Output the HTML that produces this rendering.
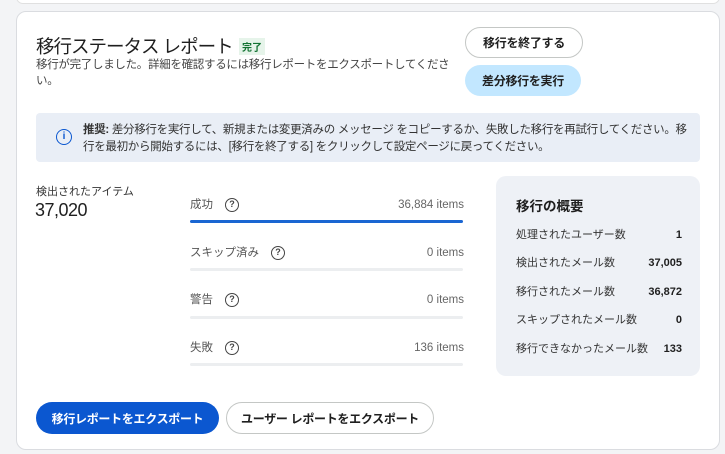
<!DOCTYPE html>
<html><head><meta charset="utf-8"><style>
*{margin:0;padding:0;box-sizing:border-box}
body{width:725px;height:454px;background:#f3f4f6;font-family:"Liberation Sans","Noto Sans CJK JP",sans-serif;color:#1f1f1f;position:relative;overflow:hidden}
.top{position:absolute;left:16px;top:-10px;width:704px;height:14px;background:#fff;border:1px solid #e0e0e0;border-radius:8px}
.card{position:absolute;left:16px;top:11px;width:704px;height:439px;background:#fff;border:1px solid #dadce0;border-radius:10px}
.a{position:absolute;white-space:nowrap}
.btn{position:absolute;border-radius:17px;font-size:12px;font-weight:bold;display:flex;align-items:center;justify-content:center;letter-spacing:-0.3px}
.q{display:inline-block;width:14px;height:14px;border:1.5px solid #444;border-radius:50%;font-size:9px;line-height:11px;text-align:center;font-weight:bold;color:#444;margin-left:12px}
.lbl{font-size:11.5px;color:#555;line-height:16px;display:flex;align-items:center}
.it{font-size:11.5px;color:#666;text-align:right;width:120px;line-height:16px}
.bar{position:absolute;left:190px;width:273px;height:3px;background:#eceef0;border-radius:2px}
.sr{position:absolute;left:516px;width:166px;font-size:11px;color:#333;display:flex;justify-content:space-between;align-items:center;line-height:15px}
.sr b{color:#1f1f1f}
</style></head><body>
<div class="top"></div>
<div class="card"></div>
<div class="a" style="left:36px;top:33px;font-size:18.5px;letter-spacing:-1px;color:#1f1f1f">移行ステータス レポート</div>
<div class="a" style="left:239px;top:38px;font-size:10px;background:#e6f4ea;color:#137333;padding:1px 3px;font-weight:bold">完了</div>
<div class="a" style="left:36px;top:57px;font-size:11.5px;letter-spacing:-0.3px;color:#444;line-height:16px">移行が完了しました。詳細を確認するには移行レポートをエクスポートしてくださ<br>い。</div>
<div class="btn" style="left:465px;top:27px;width:118px;height:31px;border:1px solid #c4c7c5;background:#fff;color:#1f1f1f">移行を終了する</div>
<div class="btn" style="left:465px;top:65px;width:116px;height:31px;background:#c2e7ff;color:#1f1f1f">差分移行を実行</div>
<div class="a" style="left:36px;top:113px;width:664px;height:49px;background:#e9eef6;border-radius:4px"></div>
<div class="a" style="left:56px;top:129px;width:16px;height:16px;border:1.8px solid #0b57d0;border-radius:50%;color:#0b57d0;font-size:10px;font-weight:bold;text-align:center;line-height:13px">i</div>
<div class="a" style="left:83px;top:122px;font-size:11.5px;letter-spacing:-0.3px;line-height:17px;color:#333"><b>推奨:</b> 差分移行を実行して、新規または変更済みの メッセージ をコピーするか、失敗した移行を再試行してください。移<br>行を最初から開始するには、[移行を終了する] をクリックして設定ページに戻ってください。</div>
<div class="a" style="left:36px;top:183px;font-size:11px;color:#333">検出されたアイテム</div>
<div class="a" style="left:35px;top:200px;font-size:18px;letter-spacing:-0.5px;color:#1f1f1f">37,020</div>

<div class="a lbl" style="left:190px;top:197px">成功<span class="q">?</span></div>
<div class="a it" style="left:344px;top:197px">36,884 items</div>
<div class="bar" style="top:220px;background:#1a66d2"></div>
<div class="a lbl" style="left:190px;top:245px">スキップ済み<span class="q">?</span></div>
<div class="a it" style="left:344px;top:245px">0 items</div>
<div class="bar" style="top:268px"></div>
<div class="a lbl" style="left:190px;top:292px">警告<span class="q">?</span></div>
<div class="a it" style="left:344px;top:292px">0 items</div>
<div class="bar" style="top:316px"></div>
<div class="a lbl" style="left:190px;top:340px">失敗<span class="q">?</span></div>
<div class="a it" style="left:344px;top:340px">136 items</div>
<div class="bar" style="top:363px"></div>

<div class="a" style="left:496px;top:176px;width:204px;height:200px;background:#eef1f6;border-radius:10px"></div>
<div class="a" style="left:516px;top:195px;font-size:13.5px;font-weight:bold;color:#1f1f1f">移行の概要</div>
<div class="sr" style="top:228px"><span>処理されたユーザー数</span><b>1</b></div>
<div class="sr" style="top:256px"><span>検出されたメール数</span><b>37,005</b></div>
<div class="sr" style="top:285px"><span>移行されたメール数</span><b>36,872</b></div>
<div class="sr" style="top:313px"><span>スキップされたメール数</span><b>0</b></div>
<div class="sr" style="top:342px"><span>移行できなかったメール数</span><b>133</b></div>

<div class="btn" style="left:36px;top:402px;width:183px;height:32px;background:#0b57d0;color:#fff">移行レポートをエクスポート</div>
<div class="btn" style="left:226px;top:402px;width:208px;height:32px;border:1px solid #c4c7c5;background:#fff;color:#1f1f1f">ユーザー レポートをエクスポート</div>
</body></html>
